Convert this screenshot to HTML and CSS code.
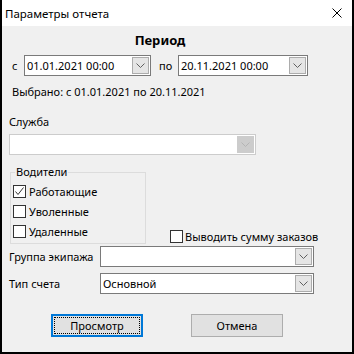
FILE: index.html
```html
<!DOCTYPE html>
<html lang="ru">
<head>
  <meta charset="UTF-8" />
  <title>Параметры отчета</title>
  <link rel="stylesheet" href="styles.css">
</head>
<body>
  <div class="window">
    <div class="titlebar">
      <span class="title">Параметры отчета</span>
      <svg class="close" width="10" height="10" viewBox="0 0 10 10">
        <path d="M0.5 0.5 L9.5 9.5 M9.5 0.5 L0.5 9.5" stroke="#000" stroke-width="1" fill="none"/>
      </svg>
    </div>

    <div class="client">
      <div class="heading">Период</div>

      <div class="period-row">
        <span class="from">с</span>
        <div class="combo date-from">
          <span class="value">01.01.2021 00:00</span>
          <span class="arrow"><svg width="9" height="5" viewBox="0 0 9 5"><polyline points="0.5,0.5 4.5,4.5 8.5,0.5" fill="none" stroke="#606060"/></svg></span>
        </div>
        <span class="to">по</span>
        <div class="combo date-to">
          <span class="value">20.11.2021 00:00</span>
          <span class="arrow"><svg width="9" height="5" viewBox="0 0 9 5"><polyline points="0.5,0.5 4.5,4.5 8.5,0.5" fill="none" stroke="#606060"/></svg></span>
        </div>
      </div>

      <div class="selected">Выбрано: с 01.01.2021 по 20.11.2021</div>

      <div class="caption">Служба</div>
      <div class="combo service disabled">
        <span class="value"></span>
        <span class="arrow"><svg width="9" height="5" viewBox="0 0 9 5"><polyline points="0.5,0.5 4.5,4.5 8.5,0.5" fill="none" stroke="#b4b4b4"/></svg></span>
      </div>

      <div class="mid-row">
        <fieldset class="group">
          <legend>Водители</legend>
          <div class="check-row">
            <span class="box"><svg width="11" height="11" viewBox="0 0 11 11"><polyline points="1.5,5.5 4,8.5 9.5,1.5" fill="none" stroke="#333" stroke-width="1"/></svg></span>
            <span>Работающие</span>
          </div>
          <div class="check-row">
            <span class="box"></span>
            <span>Уволенные</span>
          </div>
          <div class="check-row">
            <span class="box"></span>
            <span>Удаленные</span>
          </div>
        </fieldset>
        <div class="check-row sum">
          <span class="box"></span>
          <span>Выводить сумму заказов</span>
        </div>
      </div>

      <div class="field-row first">
        <span class="field-label">Группа экипажа</span>
        <div class="combo field">
          <span class="value"></span>
          <span class="arrow"><svg width="9" height="5" viewBox="0 0 9 5"><polyline points="0.5,0.5 4.5,4.5 8.5,0.5" fill="none" stroke="#606060"/></svg></span>
        </div>
      </div>

      <div class="field-row">
        <span class="field-label">Тип счета</span>
        <div class="combo field">
          <span class="value">Основной</span>
          <span class="arrow"><svg width="9" height="5" viewBox="0 0 9 5"><polyline points="0.5,0.5 4.5,4.5 8.5,0.5" fill="none" stroke="#606060"/></svg></span>
        </div>
      </div>

      <div class="buttons">
        <button class="btn default">Просмотр</button>
        <button class="btn">Отмена</button>
      </div>
    </div>
  </div>
</body>
</html>
```

FILE: styles.css
```css
body {
  margin: 0;
  background: #000;
  font-family: "Noto Sans", "Liberation Sans", sans-serif;
  font-size: 11px;
  color: #000;
  white-space: nowrap;
}

.window {
  margin: 0 2px;
  height: 352px;
  background: #f0f0f0;
}

.titlebar {
  height: 26px;
  background: #fff;
  display: flex;
  align-items: center;
  justify-content: space-between;
  padding: 0 10px 0 3px;
}

.title {
  font-size: 11.5px;
  line-height: 16px;
  margin-top: 1px;
}

.client {
  padding: 6px 0 0 7px;
}

.heading {
  width: 302px;
  text-align: center;
  font-weight: bold;
  font-size: 13px;
  line-height: 16px;
}

.period-row {
  display: flex;
  align-items: center;
  margin-top: 7px;
  height: 21px;
}

.from {
  margin-left: 3px;
  width: 12px;
}

.to {
  margin-left: 8px;
  width: 19px;
}

.combo {
  display: flex;
  align-items: center;
  height: 21px;
  box-sizing: border-box;
  border: 1px solid #7a7a7a;
  background: #fff;
  padding: 1px;
}

.combo .value {
  flex: 1;
  padding-left: 1px;
  line-height: 16px;
}

.combo .arrow {
  width: 17px;
  height: 17px;
  box-sizing: border-box;
  border: 1px solid #acacac;
  background: #e5e5e5;
  display: flex;
  align-items: center;
  justify-content: center;
}

.combo.disabled {
  border-color: #cccccc;
}

.combo.disabled .arrow {
  background: #cccccc;
  border-color: #cccccc;
}

.date-from {
  width: 127px;
}

.date-to {
  width: 130px;
}

.selected {
  margin-top: 8px;
  padding-left: 3px;
  line-height: 16px;
}

.caption {
  margin-top: 14px;
  line-height: 16px;
}

.service {
  width: 247px;
  margin-top: 4px;
}

.mid-row {
  display: flex;
  align-items: flex-end;
  margin-top: 9px;
}

.group {
  margin: 0 0 0 1px;
  width: 136px;
  box-sizing: border-box;
  border: 1px solid #dcdcdc;
  padding: 1px 0 2px 2px;
}

.group legend {
  padding: 0 1px;
  margin-left: 2px;
  line-height: 16px;
}

.check-row {
  display: flex;
  align-items: center;
  gap: 3px;
  height: 20px;
}

.box {
  width: 13px;
  height: 13px;
  box-sizing: border-box;
  border: 1px solid #333;
  background: #fff;
  display: flex;
}

.sum {
  height: 16px;
  margin-left: 24px;
  gap: 2px;
}

.field-row {
  display: flex;
  align-items: center;
  margin-top: 6px;
}

.field-row.first {
  margin-top: 2px;
}

.field-label {
  width: 91px;
  line-height: 16px;
}

.field {
  width: 214px;
}

.buttons {
  display: flex;
  gap: 48px;
  margin-top: 20px;
  padding-left: 42px;
}

.btn {
  width: 92px;
  height: 23px;
  box-sizing: border-box;
  border: 1px solid #adadad;
  background: #e1e1e1;
  font: inherit;
  color: #000;
  padding: 0;
}

.btn.default {
  border: 2px solid #0078d7;
  outline: 1px dotted #000;
  outline-offset: -4px;
}
```
